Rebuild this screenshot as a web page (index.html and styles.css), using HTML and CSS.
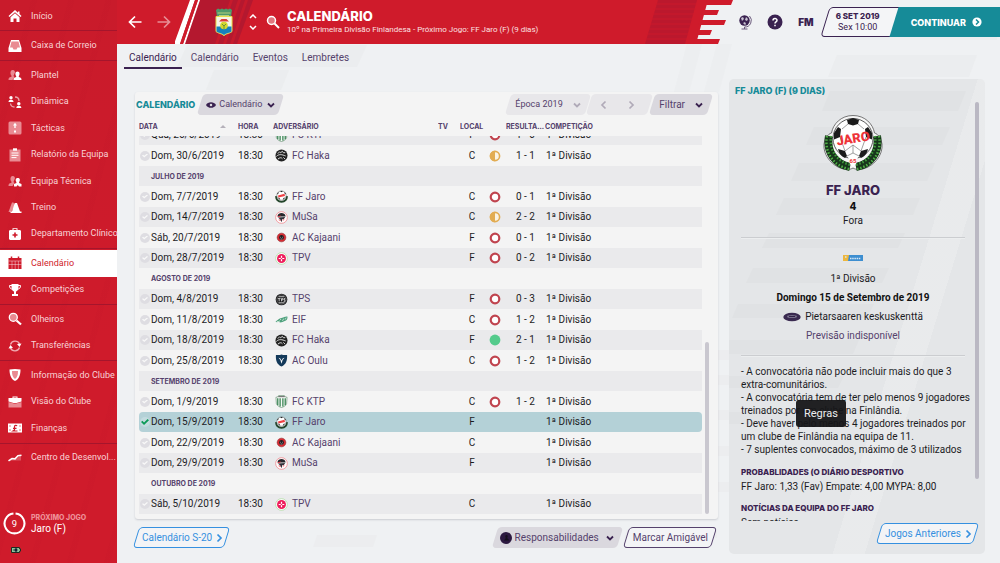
FILE: index.html
```html
<!DOCTYPE html>
<html lang="pt">
<head>
<meta charset="utf-8">
<title>Calendário</title>
<link rel="stylesheet" href="styles.css">
</head>
<body>
<svg class="defs" aria-hidden="true">
  <defs>
    <symbol id="chev-down" viewBox="0 0 10 10"><path d="M2 3.5l3 3 3-3" fill="none" stroke="currentColor" stroke-width="1.8"/></symbol>
    <symbol id="chev-right" viewBox="0 0 10 10"><path d="M3.5 1.5L7 5 3.5 8.500" fill="none" stroke="currentColor" stroke-width="1.700"/></symbol>
    <symbol id="chev-left" viewBox="0 0 10 10"><path d="M6.500 1.500L3 5l3.500 3.500" fill="none" stroke="currentColor" stroke-width="1.700"/></symbol>
    <symbol id="c-haka" viewBox="0 0 14 14"><circle cx="7" cy="7" r="6.500" fill="#222"/><path d="M3 5l2-2 1 1 2-1.500 1 1.500 2 0M1.500 8c3-3 6-2 10-.5M3 11c2-2 4-2 5-.5M9 9l2 2" stroke="#e8e8e8" stroke-width="1" fill="none"/></symbol>
    <symbol id="c-jaro" viewBox="0 0 14 14"><path d="M1.300 6.500c-.5 3.500 2 6.300 5.700 6.300s6.200-2.800 5.700-6.300" fill="#e9eee9" stroke="#23452a" stroke-width="2"/><circle cx="7" cy="6" r="5" fill="#fff" stroke="#555" stroke-width=".6"/><path d="M5.500 1h3L7 2.500zM3.500 2L2.200 4.500l1.500-.5zM10.500 2l1.300 2.500-1.500-.5zM3 8l2 .5.3 2zM11 8l-2 .5-.3 2z" fill="#222"/><path d="M3.500 7L10.500 5.300" stroke="#ef4044" stroke-width="2.400"/></symbol>
    <symbol id="c-musa" viewBox="0 0 14 14"><circle cx="7" cy="7" r="6.300" fill="#fff" stroke="#f08a90" stroke-width=".9"/><path d="M2.500 6C3 3 5 2.200 7 2.200S11 3 11.500 6z" fill="#26262b"/><path d="M3 7l8-.5-1.500 2L8 8.500 7 12 5.500 9z" fill="#35323a"/><path d="M4 9.500l2 .5M8.500 10l1.500-1M3 6.300l3-1" stroke="#ee3544"/></symbol>
    <symbol id="c-kaja" viewBox="0 0 14 14"><circle cx="7" cy="7" r="4.700" fill="#d92c33" stroke="#8a2a2e" stroke-width=".6"/><circle cx="7" cy="7" r="2.600" fill="#1c1c20"/><path d="M5.500 6.500L6.300 7M8.500 6.500L7.700 7M6 8.600h2" stroke="#ddd" stroke-width=".7"/></symbol>
    <symbol id="c-tpv" viewBox="0 0 14 14"><circle cx="7" cy="7" r="6.300" fill="#fff" stroke="#b5dfa8" stroke-width=".9"/><circle cx="7" cy="7" r="4.800" fill="#ee1d5b"/><path d="M7 4v6M4 7h6" stroke="#fff" stroke-width="1.300"/><circle cx="7" cy="7" r=".9" fill="#ee1d5b"/></symbol>
    <symbol id="c-tps" viewBox="0 0 14 14"><circle cx="7" cy="7" r="6.300" fill="#1d1d1f"/><circle cx="7" cy="7" r="5" fill="none" stroke="#999" stroke-width=".5"/><path d="M3 6h3M4.500 6v3M7 9V6h1.500v1.500H7M11 6H9.700v1.300h1V9H9.300M4 4h6M4 10.500h6" stroke="#eee" stroke-width=".8" fill="none"/></symbol>
    <symbol id="c-eif" viewBox="0 0 14 14"><path d="M.5 9.500C3 8 4 6 7 5.500S11 3.500 13.500 4c0 3-1 4-3 4.500S7 10.500 5 10 2 10.300.5 9.500z" fill="#4fa17d"/><path d="M2 9.200h3M5 8l1.500-1.500M8 8.500L9.500 6M11 7l1-2" stroke="#e5f3ea" stroke-width=".8"/></symbol>
    <symbol id="c-oulu" viewBox="0 0 14 14"><path d="M1 1C4 1.500 5.500 1 7 .6 8.500 1 10 1.500 13 1c.4 6-1 10-6 12.500C2 11 .6 7 1 1z" fill="#143a5a"/><path d="M3.800 4l2 2.500L7 10.500l1.200-4 2-2.500L8.500 4.600 7 7 5.500 4.600z" fill="#fff"/></symbol>
    <symbol id="c-ktp" viewBox="0 0 14 14"><path d="M1 2.500L3 2l1-1.500h6L11 2l2 .5-.5 7C11 12 9 13 7 13.500 5 13 3 12 1.500 9.500z" fill="#f7faf7" stroke="#4b7b58" stroke-width=".6"/><path d="M3 3.500v7.500M5.500 3.500v9M8.500 3.500v9M11 3.500v7.500" stroke="#2c7c48" stroke-width="1.300"/><path d="M3.500 1.800h7" stroke="#555"/></symbol>
    <symbol id="r-loss" viewBox="0 0 12 12"><circle cx="6" cy="6" r="4.300" fill="#fff" stroke="#c0444f" stroke-width="2.200"/></symbol>
    <symbol id="r-draw" viewBox="0 0 12 12"><circle cx="6" cy="6" r="4.600" fill="#fbf3e2" stroke="#e2ac52" stroke-width="1.600"/><path d="M6 .8a5.200 5.200 0 000 10.400z" fill="#e2ac52"/></symbol>
    <symbol id="r-win" viewBox="0 0 12 12"><circle cx="6" cy="6" r="5.400" fill="#54cb8c"/></symbol>
  </defs>
</svg>

<div class="app">
  <aside class="sidebar">
    <nav class="menu" aria-label="Principal">
      <a href="#"><svg viewBox="0 0 14 14"><path d="M7 1L.5 7l1 1L7 3.200 12.500 8l1-1-2-1.900V2.500H10v1.200z"/><path d="M2.500 8.200L7 4.300l4.500 3.900V13H8.500V9.500h-3V13h-3z"/></svg>Início</a>
      <hr>
      <a href="#"><svg viewBox="0 0 14 14"><path d="M3 1h8l2.500 8v4H.5V9z"/><path d="M3.500 2.500h7l1.500 6h-2.500l-1 2h-3l-1-2H2z" fill="#e98a92"/></svg>Caixa de Correio</a>
      <hr>
      <a href="#"><svg viewBox="0 0 14 14"><path class="dim" d="M4.500 2a2.200 2.200 0 012 3.500L5.500 8l1 1-2 3H.5c0-2 .5-2.500 3-3.200V7.800C2 6 2 2.500 4.500 2z"/><path d="M9.500 3.500c2.500 0 2.500 3 1.300 4.500v1c2.200.6 2.700 1.200 2.700 3h-8c0-1.800.5-2.400 2.700-3V8C7 6.500 7 3.500 9.500 3.500z"/></svg>Plantel</a>
      <a href="#"><svg viewBox="0 0 14 14"><circle cx="3" cy="2.700" r="1.700"/><path d="M.5 7c0-1.500 1-2.200 2.500-2.200S5.500 5.500 5.500 7z"/><circle cx="10.800" cy="8.800" r="1.700"/><path d="M8.300 13c0-1.500 1-2.200 2.500-2.200s2.500.7 2.500 2.200z"/><path d="M7 2c2.500 0 4 1.500 4 4M2.500 8.500C2.700 10.500 4 12 6.500 12" fill="none" stroke="#fff" stroke-opacity=".6" stroke-width="1.300"/></svg>Dinâmica</a>
      <a href="#"><svg viewBox="0 0 14 14"><rect class="dim" x=".5" y=".5" width="13" height="13" rx="1.500"/><path d="M7 1.800L9 4.500H7.700V7H6.300V4.500H5zM6 9.500h2v2H6z"/></svg>Tácticas</a>
      <a href="#"><svg viewBox="0 0 14 14"><path class="dim" d="M1.500 1.500h11v12h-11z"/><path d="M5 .3h4v2.400H5z"/><path d="M3.500 5h7M3.500 7.300h7M3.500 9.600h5" stroke="#fff"/></svg>Relatório da Equipa</a>
      <a href="#"><svg viewBox="0 0 14 14"><path class="dim" d="M4.500 2a2.200 2.200 0 012 3.500L5.500 8l1 1-2 3H.5c0-2 .5-2.500 3-3.200V7.800C2 6 2 2.500 4.500 2z"/><path d="M9.800 4c2.500 0 2.500 2.500 1.300 4v1l2.400 1v2.500H11L9.800 11l-1.300 1.500H6V10l2.400-1V8C7.300 6.500 7.300 4 9.800 4z"/></svg>Equipa Técnica</a>
      <a href="#"><svg viewBox="0 0 14 14"><path class="dim" d="M4 1.500h1.500L7 5l-4 6H.5z"/><path d="M6.700 2h2.300L12 10.500h1.500V12h-11v-1.500h1.500z"/></svg>Treino</a>
      <a href="#"><svg viewBox="0 0 14 14"><path d="M4.500 3V1.200h5V3h2.700L13 4v8l-1 1H2l-1-1V4l.8-1zm1-1v1h3V2z" fill-rule="evenodd"/><path d="M7 5.500v5M4.500 8h5" stroke="#cf1b2b" stroke-width="1.600"/></svg>Departamento Clínico</a>
      <hr>
      <a href="#" class="active" aria-current="page"><svg viewBox="0 0 14 14"><path d="M.5 2h13v11H.5z"/><path d="M3.500.5v3M10.500.5v3" stroke="currentColor" stroke-width="1.500"/><path d="M.5 5h13M.5 8.500h13M4 5v8M7.200 5v8M10.400 5v8" stroke="#fff" stroke-opacity=".6" stroke-width=".7"/></svg>Calendário</a>
      <a href="#"><svg viewBox="0 0 14 14"><path d="M3.500 1h7v3c0 2.500-1 4-2.500 4.500V11h2v2H4v-2h2V8.500C4.500 8 3.500 6.500 3.500 4z"/><path d="M4 2.500H1.500C1.500 5 2.500 6 4.500 6.200M10 2.500h2.500C12.500 5 11.500 6 9.500 6.200" fill="none" stroke="#fff"/></svg>Competições</a>
      <hr>
      <a href="#"><svg viewBox="0 0 14 14"><circle cx="5.300" cy="5.300" r="4" fill="#e98a92" stroke="#fff" stroke-width="1.300"/><path d="M8.500 8.500l4.500 4" stroke="#fff" stroke-width="2.200"/></svg>Olheiros</a>
      <a href="#"><svg viewBox="0 0 14 14"><path d="M2.500 5.500A4.800 4.800 0 0111.500 5M11.500 8.500A4.800 4.800 0 012.500 9" fill="none" stroke="#f0a9af" stroke-width="1.400"/><path d="M13.500 4.500L11.500 8 9 5zM.5 9.500L2.500 6 5 9z"/></svg>Transferências</a>
      <hr>
      <a href="#"><svg viewBox="0 0 14 14"><path d="M1.500 1.500L7 1l5.500.5C12.500 7 11 11 7 13 3 11 1.500 7 1.500 1.500z"/><path d="M4 3h6c0 4-.6 6-3 8C4.600 9 4 7 4 3z" fill="#e98a92"/></svg>Informação do Clube</a>
      <a href="#"><svg viewBox="0 0 14 14"><path class="dim" d="M.5 7l5.500 1.500h2L13.500 7v5.500H.5z"/><path d="M4.500 3V1.500h5V3h4v3.500L8.500 8h-3l-5-1.500V3zM5.500 3h3v-.6h-3z" fill-rule="evenodd"/></svg>Visão do Clube</a>
      <a href="#"><svg viewBox="0 0 14 14"><path d="M0 2.500h14v9H0z"/><path d="M9 5C8.500 4 6.500 4 6.500 5.500V9L5 10h4.500M5 7.300h3.500M2 4.500v1M2 8.500v1M12 4.500v1M12 8.500v1" stroke="#cf1b2b" stroke-width="1.200" fill="none"/></svg>Finanças</a>
      <hr>
      <a href="#"><svg viewBox="0 0 14 14"><path class="dim" d="M1 10l4-2 3 0 5-4v5.500H1z" opacity=".5"/><path d="M.5 9.800L4 7.500l3 .3 3-3 3.500-.6" fill="none" stroke="#fff" stroke-width="1.600"/></svg>Centro de Desenvol...</a>
    </nav>
    <div class="next">
      <div class="next-row">
        <svg class="ring" viewBox="0 0 22 22"><path d="M12 1.500a9.500 9.500 0 11-2 0" fill="none" stroke="#fff" stroke-width="2"/><text x="11" y="14" text-anchor="middle">9</text></svg>
        <div><div class="next-label">PRÓXIMO JOGO</div><div class="next-team">Jaro (F)</div></div>
      </div>
      <svg class="battery" viewBox="0 0 10 6"><path d="M.5.5h8v1.300h1v2.400h-1v1.300h-8z" fill="#8fc49b" stroke="#1c2b20"/><path d="M2 3h2M4 1.800h2v2.400H4z" stroke="#123" stroke-width=".7" fill="#123"/></svg>
    </div>
  </aside>

  <div class="content">
    <svg class="backdrop" viewBox="0 0 883 563" preserveAspectRatio="none" aria-hidden="true">
      <g fill="#e9ebed"><path d="M70 45h180l-10 22H60zM97 70h75l-8 20H89zM720 55h140l-8 22H711zM730 12h150v28H718z" opacity=".7"/><path d="M600 350h12v10h-12zM600 375h12v10h-12zM600 410h12v10h-12zM600 446h12v10h-12zM600 482h12v10h-12zM200 535h60l-4 12h-60zM510 530h90v8h-93z" opacity=".6"/><path d="M570 44h15l-13 48h-15zM600 44h15l-13 48h-15z" opacity=".5"/></g>
    </svg>
    <header class="topbar">
      <div class="banner">
        <button class="icon-btn" aria-label="Retroceder"><svg width="14" height="14" viewBox="0 0 14 14"><path d="M7 1.500L1.500 7 7 12.500M1.500 7h12" fill="none" stroke="#fff" stroke-width="1.700"/></svg></button>
        <button class="icon-btn fade" aria-label="Avançar"><svg width="14" height="14" viewBox="0 0 14 14"><path d="M7 1.500L12.500 7 7 12.500M12.500 7H.5" fill="none" stroke="#fff" stroke-width="1.700"/></svg></button>
        <div class="badge-area">
          <svg class="stripes" viewBox="0 0 84 44" aria-hidden="true">
            <path d="M18 0h60L62 44H2z" fill="#b4182f"/>
            <path d="M15 0h5L5 44H-1zM23 0h2L10 44H8z" fill="#fff"/><path d="M20 0h3L8 44H5z" fill="#cf1b2b"/>
            <path d="M55 0h3L43 44h-3zM63 0h3L51 44h-3zM70 0h3L58 44h-3z" fill="#cf1b2b" opacity=".7"/>
          </svg>
          <svg class="club" viewBox="0 0 18 28" role="img" aria-label="MYPA">
            <path d="M1 2l2-1.500 2 1 2-1 2 1 2-1 2 1 2-1L17 2l-1 7H2z" fill="#4f9a6b"/><path d="M2.500 5h13M4 7.500h10" stroke="#b7cf7c" stroke-width="1"/>
            <path d="M1 8.500h16v15c-2 2-5 1.500-8 4-3-2.500-6-2-8-4z" fill="#f5f6e6" stroke="#e5e04c" stroke-width="1"/>
            <path d="M1.500 18.500h15v5c-2 1.500-5 1.500-7.500 3.500-2.500-2-5.500-2-7.500-3.500z" fill="#1781bb"/>
            <path d="M4 13.500l2.500-2.500h5l2.500 2.500z" fill="#dc3c3c"/><circle cx="9" cy="17.500" r="3.800" fill="#d4d82e"/><path d="M7 16l2 2 2-2M9 18v3" stroke="#6a9338" fill="none"/>
          </svg>
        </div>
        <div class="stepper">
          <button class="icon-btn" aria-label="Anterior"><svg width="8" height="5" viewBox="0 0 8 5"><path d="M1 4l3-3 3 3" fill="none" stroke="#fff" stroke-width="1.500"/></svg></button>
          <button class="icon-btn" aria-label="Seguinte"><svg width="8" height="5" viewBox="0 0 8 5"><path d="M1 1l3 3 3-3" fill="none" stroke="#fff" stroke-width="1.500"/></svg></button>
        </div>
        <button class="icon-btn find" aria-label="Procurar"><svg width="14" height="14" viewBox="0 0 14 14"><circle cx="5.500" cy="5.500" r="4" fill="#e2767f" stroke="#fff" stroke-width="1.500"/><path d="M8.500 8.500l4.500 4.500" stroke="#fff" stroke-width="2"/></svg></button>
        <div class="heading">
          <h1>CALENDÁRIO</h1>
          <p>10º na Primeira Divisão Finlandesa - Próximo Jogo: FF Jaro (F) (9 dias)</p>
        </div>
        <svg class="bars" viewBox="0 0 92 44" aria-hidden="true">
          <path d="M17 0h39L44 44H4z" fill="#b4182f" opacity=".75"/>
          <path d="M14 4h42M12 9h43M11 14h42M10 19h42M8 24h43M7 29h42M5 34h43M4 39h42" stroke="#cf1b2b" stroke-width=".8"/>
          <path d="M67 0h26v44H55z" fill="#eff1f3"/>
          <path d="M66 0h26l-2 5H65zM62 10h16l-2 5H60zM59 20h26l-2 5H57zM57 30h14l-2 5H55zM54 39h25l-2 5H52z" fill="#cf1b2b"/>
        </svg>
      </div>
      <div class="tools">
        <button class="icon-btn" aria-label="Mundo"><svg width="14" height="16" viewBox="0 0 14 16"><circle cx="6.500" cy="6.500" r="5.200" fill="#3a2250"/><path d="M3 4l2-1 1 2-2 2zM8 3l2 2-1 2-2-1zM5 9l2-1 1 2-1 1z" fill="#c9c4d2"/><path d="M11.500 2a6.500 6.500 0 01-5 11v2M3.500 15h6" stroke="#6b5a7c" stroke-width="1" fill="none"/></svg></button>
        <button class="icon-btn" aria-label="Ajuda"><svg width="16" height="16" viewBox="0 0 16 16"><circle cx="8" cy="8" r="7.500" fill="#3a2250"/><path d="M6 6.500C6 4 10 4 10 6.300 10 8 8 7.800 8 9.500M8 10.800v1.500" stroke="#fff" stroke-width="1.500" fill="none"/></svg></button>
        <button class="fm">FM</button>
      </div>
      <div class="clock">
        <div class="date"><strong>6 SET 2019</strong><span>Sex 10:00</span></div>
        <button class="continue">CONTINUAR<svg width="10" height="10" viewBox="0 0 10 10"><circle cx="5" cy="5" r="4.600" fill="#fff"/><path d="M4 2.500L6.500 5 4 7.500" fill="none" stroke="#168b98" stroke-width="1.500"/></svg></button>
      </div>
    </header>

    <div class="columns">
      <main class="primary">
        <nav class="tabs" aria-label="Secções">
          <a href="#" class="on">Calendário</a><a href="#">Calendário</a><a href="#">Eventos</a><a href="#">Lembretes</a>
        </nav>
        <section class="panel">
          <div class="toolbar">
            <h2>CALENDÁRIO</h2>
            <label class="slant view">
              <svg class="eye" viewBox="0 0 12 10"><path d="M0 5c2-4.500 10-4.500 12 0-2 4.500-10 4.500-12 0z" fill="#3a2250"/><circle cx="6" cy="5" r="1.500" fill="#dcdae0"/></svg>
              <select aria-label="Vista"><option>Calendário</option></select>
              <svg class="chev"><use href="#chev-down"/></svg>
            </label>
            <div class="season">
              <label class="slant pale"><select aria-label="Época"><option>Época 2019</option></select><svg class="chev"><use href="#chev-down"/></svg></label>
              <div class="slant pale pager"><button aria-label="Época anterior"><svg class="chev"><use href="#chev-left"/></svg></button><button aria-label="Época seguinte"><svg class="chev"><use href="#chev-right"/></svg></button></div>
            </div>
            <button class="slant filter">Filtrar<svg class="chev"><use href="#chev-down"/></svg></button>
          </div>
          <div class="list">
            <div class="scroll" id="fixtures">
              <table>
                <colgroup><col class="w-date"><col class="w-time"><col><col class="w-tv"><col class="w-local"><col class="w-dot"><col class="w-score"><col class="w-comp"></colgroup>
                <thead><tr><th class="sorted">DATA</th><th>HORA</th><th>ADVERSÁRIO</th><th>TV</th><th>LOCAL</th><th></th><th>RESULTA...</th><th>COMPETIÇÃO</th></tr></thead>
                <tbody>
                  <tr><td><label><input type="checkbox">Qua, 26/6/2019</label></td><td>18:30</td><td><a href="#"><svg><use href="#c-ktp"/></svg>FC KTP</a></td><td></td><td>F</td><td><svg><use href="#r-loss"/></svg></td><td>1 - 0</td><td>1ª Divisão</td></tr>
                  <tr><td><label><input type="checkbox">Dom, 30/6/2019</label></td><td>18:30</td><td><a href="#"><svg><use href="#c-haka"/></svg>FC Haka</a></td><td></td><td>C</td><td><svg><use href="#r-draw"/></svg></td><td>1 - 1</td><td>1ª Divisão</td></tr>
                  <tr class="month"><th colspan="8">JULHO DE 2019</th></tr>
                  <tr><td><label><input type="checkbox">Dom, 7/7/2019</label></td><td>18:30</td><td><a href="#"><svg><use href="#c-jaro"/></svg>FF Jaro</a></td><td></td><td>C</td><td><svg><use href="#r-loss"/></svg></td><td>0 - 1</td><td>1ª Divisão</td></tr>
                  <tr><td><label><input type="checkbox">Dom, 14/7/2019</label></td><td>18:30</td><td><a href="#"><svg><use href="#c-musa"/></svg>MuSa</a></td><td></td><td>C</td><td><svg><use href="#r-draw"/></svg></td><td>2 - 2</td><td>1ª Divisão</td></tr>
                  <tr><td><label><input type="checkbox">Sáb, 20/7/2019</label></td><td>18:30</td><td><a href="#"><svg><use href="#c-kaja"/></svg>AC Kajaani</a></td><td></td><td>F</td><td><svg><use href="#r-loss"/></svg></td><td>0 - 1</td><td>1ª Divisão</td></tr>
                  <tr><td><label><input type="checkbox">Dom, 28/7/2019</label></td><td>18:30</td><td><a href="#"><svg><use href="#c-tpv"/></svg>TPV</a></td><td></td><td>F</td><td><svg><use href="#r-loss"/></svg></td><td>0 - 2</td><td>1ª Divisão</td></tr>
                  <tr class="month"><th colspan="8">AGOSTO DE 2019</th></tr>
                  <tr><td><label><input type="checkbox">Dom, 4/8/2019</label></td><td>18:30</td><td><a href="#"><svg><use href="#c-tps"/></svg>TPS</a></td><td></td><td>F</td><td><svg><use href="#r-loss"/></svg></td><td>0 - 3</td><td>1ª Divisão</td></tr>
                  <tr><td><label><input type="checkbox">Dom, 11/8/2019</label></td><td>18:30</td><td><a href="#"><svg><use href="#c-eif"/></svg>EIF</a></td><td></td><td>C</td><td><svg><use href="#r-loss"/></svg></td><td>1 - 2</td><td>1ª Divisão</td></tr>
                  <tr><td><label><input type="checkbox">Dom, 18/8/2019</label></td><td>18:30</td><td><a href="#"><svg><use href="#c-haka"/></svg>FC Haka</a></td><td></td><td>F</td><td><svg><use href="#r-win"/></svg></td><td>2 - 1</td><td>1ª Divisão</td></tr>
                  <tr><td><label><input type="checkbox">Dom, 25/8/2019</label></td><td>18:30</td><td><a href="#"><svg><use href="#c-oulu"/></svg>AC Oulu</a></td><td></td><td>C</td><td><svg><use href="#r-loss"/></svg></td><td>1 - 2</td><td>1ª Divisão</td></tr>
                  <tr class="month"><th colspan="8">SETEMBRO DE 2019</th></tr>
                  <tr><td><label><input type="checkbox">Dom, 1/9/2019</label></td><td>18:30</td><td><a href="#"><svg><use href="#c-ktp"/></svg>FC KTP</a></td><td></td><td>C</td><td><svg><use href="#r-loss"/></svg></td><td>1 - 2</td><td>1ª Divisão</td></tr>
                  <tr class="selected"><td><label><input type="checkbox" checked>Dom, 15/9/2019</label></td><td>18:30</td><td><a href="#"><svg><use href="#c-jaro"/></svg>FF Jaro</a></td><td></td><td>F</td><td></td><td></td><td>1ª Divisão</td></tr>
                  <tr><td><label><input type="checkbox">Dom, 22/9/2019</label></td><td>18:30</td><td><a href="#"><svg><use href="#c-kaja"/></svg>AC Kajaani</a></td><td></td><td>C</td><td></td><td></td><td>1ª Divisão</td></tr>
                  <tr><td><label><input type="checkbox">Dom, 29/9/2019</label></td><td>18:30</td><td><a href="#"><svg><use href="#c-musa"/></svg>MuSa</a></td><td></td><td>F</td><td></td><td></td><td>1ª Divisão</td></tr>
                  <tr class="month"><th colspan="8">OUTUBRO DE 2019</th></tr>
                  <tr><td><label><input type="checkbox">Sáb, 5/10/2019</label></td><td>18:30</td><td><a href="#"><svg><use href="#c-tpv"/></svg>TPV</a></td><td></td><td>C</td><td></td><td></td><td>1ª Divisão</td></tr>
                </tbody>
              </table>
            </div>
            <div class="track"><div class="thumb low"></div></div>
          </div>
        </section>
        <footer class="actions">
          <button class="slant outline blue">Calendário S-20<svg class="chev"><use href="#chev-right"/></svg></button>
          <button class="slant resp"><svg class="person" viewBox="0 0 12 12"><circle cx="6" cy="6" r="6" fill="#2c1940"/><path d="M6.500 3c1.500 0 1.500 2 .7 3l2.300 2.500H4L5.800 6C5 5 5 3 6.500 3z" fill="#15101d"/></svg>Responsabilidades<svg class="chev"><use href="#chev-down"/></svg></button>
          <button class="slant outline">Marcar Amigável</button>
        </footer>
      </main>

      <aside class="match">
        <svg class="backdrop" viewBox="0 0 256 475" preserveAspectRatio="none" aria-hidden="true">
          <path d="M101 12h136l-8 20H93zM85 48h136l-8 18H77zM70 84h136l-8 18H62zM55 119h136l-7 17H47zM40 154h136l-7 15H33zM24 189h136l-7 15H17zM9 225h136l-7 14H3zM0 261h130l-6 14H0zM0 297h115l-6 12H0zM0 333h100l-6 12H0z" fill="#dddfe1" opacity=".6"/>
        </svg>
        <h2>FF JARO (F) (9 DIAS)</h2>
        <div class="match-body">
          <div class="details">
            <div class="summary">
              <svg class="crest" viewBox="0 0 60 56" role="img" aria-label="FF Jaro">
                <path d="M30 .5C42 .5 50 9 51.500 18c4 1 6.500 6 7.500 11 1 10-6 19-14 23-6 3-12 3-15 1-3 2-9 2-15-1C7 48 0 39 1 29c1-5 3.500-10 7.500-11C10 9 18 .5 30 .5z" fill="#f6f6f6" stroke="#444" stroke-width=".7"/>
                <path d="M6 21C3 37 12 49 27 52M54 21c3 16-6 28-21 31" fill="none" stroke="#17351b" stroke-width="8"/>
                <path d="M4 21C1 37 10 51 26 54M56 21c3 16-6 30-22 33" fill="none" stroke="#4fae45" stroke-width="2.500" stroke-dasharray="1.500 1.800"/>
                <path d="M8 21C6 35 14 47 28 50M52 21c2 14-6 26-20 29" fill="none" stroke="#3f9a3b" stroke-width="2.500" stroke-dasharray="1.500 1.800"/>
                <circle cx="30" cy="23.500" r="20" fill="#fff" stroke="#333" stroke-width=".8"/>
                <path d="M24 5l6-2 6 2-1 4-5 1.500L25 9zM11 18l4-6 3 2-1 8-6 2.500zM49 18l-4-6-3 2 1 8 6 2.500zM15 34l7 2 2 5-2 2c-4-1.500-6-5-7-9zM45 34l-7 2-2 5 2 2c4-1.500 6-5 7-9z" fill="#1b1b1b"/>
                <path d="M25 9l-6 5M35 9l6 5M17 22l5 14M43 22l-5 14M24 41l6-3 6 3M22 36l8-6 8 6M30 38v-8" stroke="#777" stroke-width=".7" fill="none"/>
                <text class="crest-name" x="30" y="28" text-anchor="middle" transform="rotate(-9 30 23)">JARO</text>
                <path d="M25 42h10l-2 7-3 3-3-3z" fill="#fff"/><text class="crest-year" x="30" y="48" text-anchor="middle">65</text>
              </svg>
              <h3>FF JARO</h3>
              <strong class="pos">4</strong>
              <p>Fora</p>
            </div>
            <hr>
            <div class="venue">
              <svg class="comp-logo" viewBox="0 0 20 6"><path d="M0 0h20v6H0z" fill="#3d8ed0"/><path d="M0 0h6L5 6H0z" fill="#edb73e"/><path d="M7 3.500h11M2 2h2" stroke="#d5e8f7" stroke-width="1.500" stroke-dasharray="1.500 .7"/></svg>
              <p>1ª Divisão</p>
              <p class="when">Domingo 15 de Setembro de 2019</p>
              <p class="ground"><svg viewBox="0 0 18 10"><ellipse cx="9" cy="5" rx="8.700" ry="4.300" fill="#3a2a50"/><ellipse cx="9" cy="4.500" rx="5" ry="1.500" fill="#77708a"/><path d="M6 4.500h6" stroke="#322147"/></svg>Pietarsaaren keskuskenttä</p>
              <p class="forecast">Previsão indisponível</p>
            </div>
            <hr>
            <div class="rules">
              <p>- A convocatória não pode incluir mais do que 3<br>extra-comunitários.<br>- A convocatória tem de ter pelo menos 9 jogadores<br>treinados por um clube na Finlândia.<br>- Deve haver pelo menos 4 jogadores treinados por<br>um clube de Finlândia na equipa de 11.<br>- 7 suplentes convocados, máximo de 3 utilizados</p>
              <div class="tooltip" role="tooltip">Regras</div>
            </div>
            <h4>PROBABLIDADES (O DIÁRIO DESPORTIVO</h4>
            <p class="line">FF Jaro: 1,33 (Fav) Empate: 4,00 MYPA: 8,00</p>
            <h4>NOTÍCIAS DA EQUIPA DO FF JARO</h4>
            <p class="line">Sem notícias.</p>
          </div>
          <div class="track"><div class="thumb high"></div></div>
        </div>
        <button class="slant outline blue">Jogos Anteriores<svg class="chev"><use href="#chev-right"/></svg></button>
      </aside>
    </div>
  </div>
</div>
<script src="main.js"></script>
</body>
</html>
```
FILE: styles.css
```css
* { box-sizing: border-box; }

:root {
  --red: #cf1b2b;
  --purple: #3a2250;
  --plum: #55426c;
  --teal: #168b98;
  --blue: #3590e0;
  --text: "Roboto", "Liberation Sans", sans-serif;
  --display: "Inter", "Roboto", sans-serif;
}

body {
  margin: 0;
  font: 10px/13px var(--text);
  color: #1c1c1f;
  background: #eff1f3;
}

h1, h2, h3, h4, p { margin: 0; }
a { color: inherit; text-decoration: none; }
button, select {
  margin: 0;
  padding: 0;
  border: 0;
  background: none;
  color: inherit;
  font: inherit;
  appearance: none;
}
.defs { display: none; }

.app {
  display: grid;
  grid-template-columns: 117px minmax(0, 1fr);
  height: 100vh;
  min-height: 540px;
}

/* Sidebar */
.sidebar {
  display: flex;
  flex-direction: column;
  min-height: 0;
  padding-top: 3px;
  color: #f8d3d6;
  background:
    repeating-linear-gradient(105deg, transparent 0 30px, rgba(150, 0, 30, .03) 30px 36px),
    linear-gradient(#c91b2b, var(--red) 60%);
}
.menu { display: flex; flex: 1; flex-direction: column; }
.menu a {
  display: flex;
  flex: 1;
  align-items: center;
  gap: 9px;
  padding-left: 8px;
  font-size: 9px;
  white-space: nowrap;
}
.menu svg { width: 14px; height: 14px; flex: none; fill: #fff; }
.menu .dim { fill: #e98a92; }
.menu hr {
  width: 100%;
  height: 3px;
  margin: 0;
  border: 0;
  background: linear-gradient(transparent 1px, #a5152c 1px 2px, transparent 2px);
}
.menu .active { background: #fff; color: var(--red); }
.menu .active svg { fill: var(--red); }
.next { height: 92px; padding: 41px 0 0 3px; }
.next-row { display: flex; align-items: center; gap: 5px; }
.ring { width: 23px; height: 23px; }
.ring text { font-size: 9px; fill: #fff; }
.next-label { font: 800 7px/10px var(--display); color: #ee8f98; }
.next-team { font-size: 10px; line-height: 12px; color: #fff; }
.battery { display: block; width: 10px; height: 6px; margin: 12px 0 0 8px; }

/* Top bar */
.content { position: relative; display: flex; flex-direction: column; min-width: 0; min-height: 0; }
.backdrop { position: absolute; inset: 0; width: 100%; height: 100%; }
.topbar { position: relative; display: flex; height: 44px; flex: none; }
.banner {
  display: flex;
  flex: 1;
  align-items: center;
  min-width: 0;
  padding-left: 11px;
  background: var(--red);
}
.icon-btn { display: flex; align-items: center; justify-content: center; }
.fade { margin-left: 15px; opacity: .5; }
.badge-area { position: relative; width: 84px; height: 44px; margin-left: 4px; }
.stripes { display: block; width: 84px; height: 44px; }
.club { position: absolute; left: 40px; top: 8px; width: 18px; height: 28px; }
.stepper { position: relative; display: grid; gap: 6px; margin-left: -10px; }
.find { margin-left: 9px; }
.heading { flex: 1; min-width: 0; margin-left: 7px; white-space: nowrap; }
h1 { font: 800 13px/15px var(--display); color: #fff; }
.heading p { font-size: 8px; line-height: 12px; color: #fbe0e2; }
.bars { width: 92px; height: 44px; flex: none; }
.tools { display: flex; align-items: center; gap: 15px; padding: 0 6px 0 5px; color: var(--purple); }
.fm { font: 900 10px/12px var(--display); }
.clock {
  position: relative;
  display: flex;
  align-items: stretch;
  margin: 7px 0;
  overflow: hidden;
  color: var(--purple);
}
.date {
  position: relative;
  display: flex;
  flex-direction: column;
  justify-content: center;
  width: 74px;
  padding-left: 2px;
  text-align: center;
  font-size: 9px;
  line-height: 11px;
}
.date::before {
  content: "";
  position: absolute;
  inset: 0 -20px 0 5px;
  border: 1px solid var(--purple);
  border-radius: 4px;
  background: #f4f5f7;
  transform: skewX(-17deg);
}
.date > * { position: relative; }
.date strong { font: 800 8px/11px var(--display); }
.continue {
  position: relative;
  z-index: 0;
  display: flex;
  align-items: center;
  gap: 6px;
  padding: 0 18px 0 17px;
  color: #fff;
  font: 800 9px/11px var(--display);
}
.continue::before {
  content: "";
  position: absolute;
  inset: 0 -10px 0 0;
  background: var(--teal);
  transform: skewX(-17deg);
  z-index: -1;
}

/* Columns */
.columns {
  position: relative;
  display: grid;
  grid-template-columns: minmax(0, 1fr) 256px;
  gap: 11px;
  flex: 1;
  min-height: 0;
  padding: 0 15px 9px 18px;
}
.primary { display: flex; flex-direction: column; min-height: 0; }
.tabs { display: flex; height: 25px; margin-left: -11px; color: var(--plum); }
.tabs a { padding: 7px 5px 0; margin-right: 4px; border-bottom: 2px solid transparent; }
.tabs .on { border-color: var(--purple); color: var(--purple); }
.panel {
  display: flex;
  flex: 1;
  flex-direction: column;
  min-height: 0;
  margin: 23px 0 8px;
  padding: 2px 0 5px;
  border-radius: 3px;
  background: #f4f4f4;
  box-shadow: 0 1px 2px rgba(60, 60, 80, .2);
}
.toolbar { display: flex; align-items: center; padding: 0 5px 0 1px; }
h2 { font: 800 9px/12px var(--display); color: var(--teal); }

.slant {
  position: relative;
  z-index: 0;
  display: flex;
  align-items: center;
  height: 21px;
  padding: 0 9px 0 10px;
  gap: 6px;
  color: var(--plum);
  white-space: nowrap;
}
.slant::before {
  content: "";
  position: absolute;
  z-index: -1;
  inset: 0 3px;
  border-radius: 4px;
  background: #dad8de;
  transform: skewX(-17deg);
}
.slant.pale::before { background: #e8e7ea; }
.slant.outline::before { background: #f3f4f6; border: 1px solid var(--plum); }
.chev { width: 10px; height: 10px; flex: none; color: var(--purple); }
.slant.blue { gap: 2px; padding: 0 6px 0 9px; color: var(--blue); }
.slant.blue::before { border-color: var(--blue); }
.blue .chev { color: var(--blue); }
.pale { font-size: 9px; }
.pale .chev { color: #b0aab8; }
.eye { width: 10px; height: 10px; }
.view { margin-left: 2px; padding: 0 8px 0 9px; gap: 3px; font-size: 9px; }
.season { display: flex; margin-left: auto; }
.season label { gap: 9px; }
.season .pager { gap: 17px; margin-left: -5px; padding: 0 17px 0 13px; }
.pager button { display: flex; }
.filter { gap: 9px; margin-left: -4px; }

/* Fixture list */
.list { display: flex; flex: 1; min-height: 0; padding-left: 4px; }
.scroll { flex: 1; min-width: 0; overflow-y: auto; scrollbar-width: none; }
table { width: 100%; border-collapse: separate; border-spacing: 0; table-layout: fixed; }
.w-date { width: 99px; }
.w-time { width: 35px; }
.w-tv { width: 22px; }
.w-local { width: 24px; }
.w-dot { width: 22px; }
.w-score { width: 39px; }
.w-comp { width: 157px; }
th, td { padding: 0; text-align: left; white-space: nowrap; }
thead th {
  position: sticky;
  top: 0;
  z-index: 2;
  height: 21px;
  padding-top: 2px;
  background: #f4f4f4;
  font: 700 7px/10px var(--display);
  color: var(--plum);
}
.sorted::after {
  content: "";
  position: absolute;
  top: 10px;
  right: 12px;
  border: 3px solid transparent;
  border-top: 0;
  border-bottom: 3px solid #b5b1ba;
}
tbody tr { height: 21px; }
tbody tr:nth-child(odd) { height: 20px; background: #eaeaec; }
tbody td { line-height: 12px; }
td label, td a { display: flex; align-items: center; }
td a { gap: 4px; padding-left: 2px; color: var(--plum); }
td svg { display: block; width: 13px; height: 13px; }
td:nth-child(5), td:nth-child(7) { text-align: center; }
td:nth-child(6) svg { width: 12px; height: 12px; margin-left: 5px; }
td:last-child { padding-left: 1px; }
.month th { padding: 1px 0 0 12px; font: 700 7px/10px var(--display); color: var(--plum); }
tbody .selected.selected { background: none; }
.selected td { background: #b4d1d7; }
.selected td:first-child { border-radius: 4px 0 0 4px; }
.selected td:last-child { border-radius: 0 4px 4px 0; }

input[type="checkbox"] {
  display: grid;
  place-items: center;
  width: 10px;
  height: 10px;
  margin: 0 1px;
  flex: none;
  appearance: none;
  border-radius: 50%;
  background: #dedde2;
}
input[type="checkbox"]::before {
  content: "";
  width: 6px;
  height: 4px;
  background: #f8f8f8;
  clip-path: polygon(0 50%, 18% 30%, 38% 58%, 82% 0, 100% 20%, 38% 100%);
}
input[type="checkbox"]:checked { background: #c3dbdf; }
input[type="checkbox"]:checked::before { width: 8px; height: 6px; background: #0c9a58; }

.track { width: 16px; flex: none; display: flex; flex-direction: column; }
.thumb { width: 4px; border-radius: 2px; background: #c9c7cf; }
.thumb.low { height: 43%; margin: auto 0 0 3px; }

.actions { display: flex; align-items: center; height: 21px; margin: 0 1px 6px -2px; }
.actions .resp { margin-left: auto; padding: 0 8px; }
.person { width: 12px; height: 12px; margin-right: -3px; }

/* Match panel */
.match {
  position: relative;
  display: flex;
  flex-direction: column;
  min-height: 0;
  margin-top: 35px;
  padding: 6px 6px 10px;
  border-radius: 5px;
  background:
    linear-gradient(107deg, transparent 62%, rgba(255, 255, 255, .18) 62% 70%, transparent 70%),
    #e4e6e8;
}
.match h2, .match-body { position: relative; }
.match-body { display: flex; flex: 1; min-height: 0; padding-top: 5px; }
.details { flex: 1; min-width: 0; overflow: hidden; padding: 13px 10px 0 6px; }
.match .track { width: 4px; }
.thumb.high { height: 90%; background: #bab8c3; }
.match hr { height: 2px; margin: 0; border: 0; border-top: 1px solid #cbcdd0; background: #eceeef; }
.summary, .venue { text-align: center; }
.crest { display: block; width: 60px; height: 56px; margin: 0 auto 10px; }
.crest-name { font: 900 13px var(--text); fill: #ee3338; }
.crest-year { font: 700 6px var(--text); fill: #ee3338; }
h3 { font: 800 13px/18px var(--display); color: var(--purple); }
.pos { display: block; font: 800 10px/15px var(--display); color: #111; }
.summary p { margin-bottom: 10px; }
.venue { padding: 16px 0 12px; }
.comp-logo { display: block; width: 20px; height: 6px; margin: 0 auto 10px; }
.venue p { margin-bottom: 4px; line-height: 15px; }
.venue .when { font-weight: 700; color: #111; }
.ground { display: flex; align-items: center; justify-content: center; gap: 4px; }
.ground svg { width: 18px; height: 10px; }
.venue .forecast { margin: 0; color: var(--plum); }
.rules { position: relative; padding: 8px 0 10px; white-space: nowrap; }
.tooltip {
  position: absolute;
  left: 55px;
  top: 43px;
  padding: 6px 8px;
  border-radius: 3px;
  background: rgba(22, 22, 24, .95);
  color: #eee;
  font-size: 11px;
  line-height: 15px;
}
h4 { font: 800 8px/12px var(--display); color: var(--purple); white-space: nowrap; }
.line { padding: 2px 0 9px; white-space: nowrap; }
.match > .slant { align-self: flex-end; margin-top: 2px; }
```
FILE: main.js
```js
const fixtures = document.getElementById('fixtures');
fixtures.scrollTop = fixtures.scrollHeight;
```
